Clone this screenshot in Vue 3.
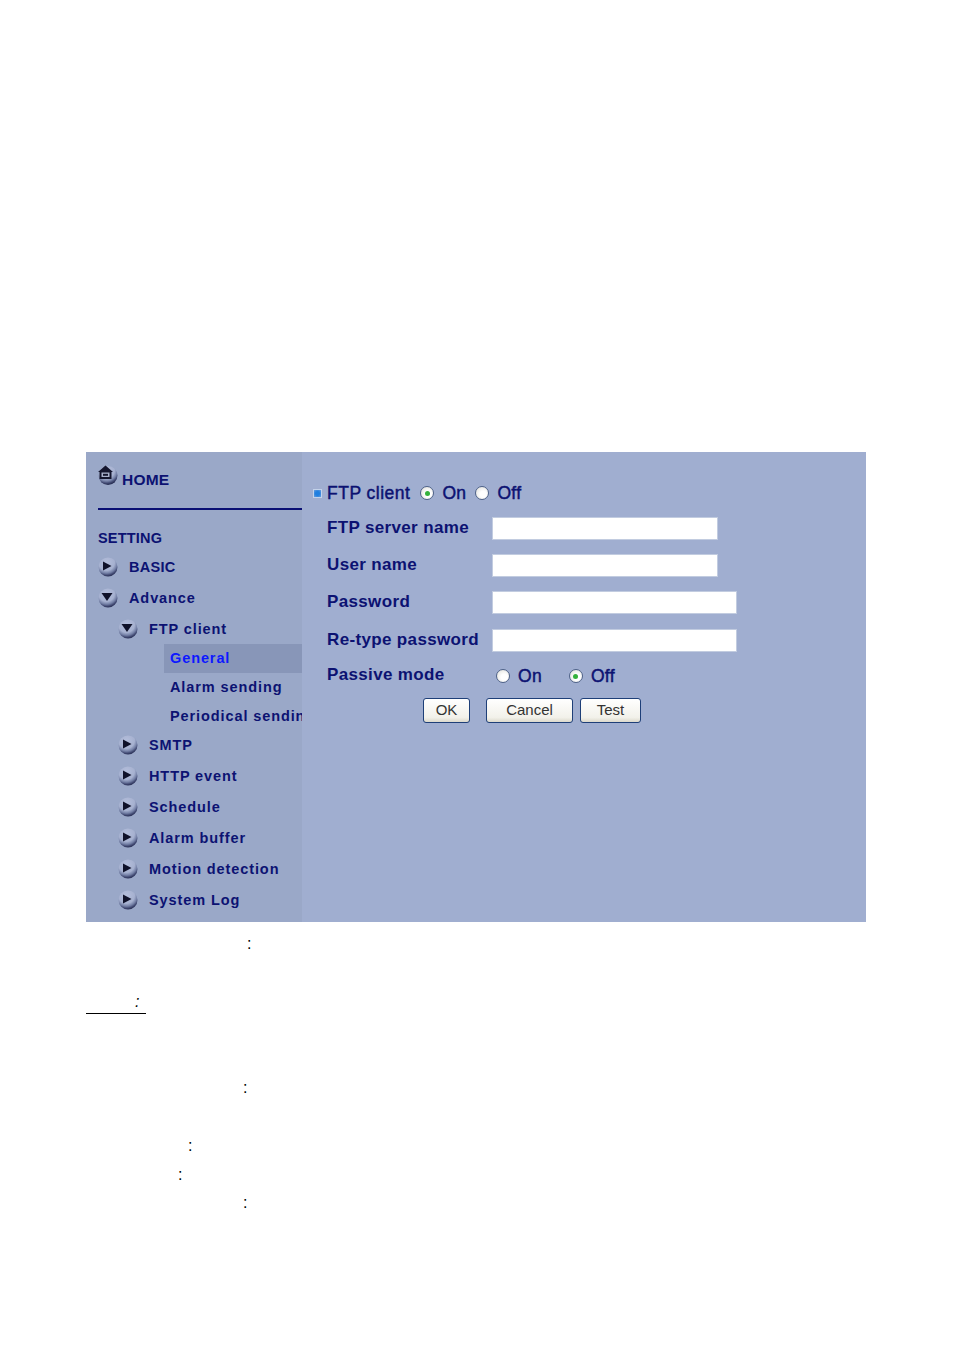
<script setup>
const topItems = ['SMTP', 'HTTP event', 'Schedule', 'Alarm buffer', 'Motion detection', 'System Log']
const subItems = [
  { label: 'General', active: true },
  { label: 'Alarm sending', active: false },
  { label: 'Periodical sending', active: false }
]
const fields = [
  { label: 'FTP server name', wide: false },
  { label: 'User name', wide: false },
  { label: 'Password', wide: true },
  { label: 'Re-type password', wide: true }
]
const notes = ['n1', 'n2', 'n3', 'n4', 'n5', 'n6']
const right = 'M5 4.5 L13.5 9 L5 13.5 Z'
const down = 'M3.5 5 L14.5 5 L9 13 Z'
</script>

<template>
  <div class="page">
    <svg width="0" height="0" class="defs">
      <defs>
        <radialGradient id="ball" gradientUnits="userSpaceOnUse" cx="8.5" cy="5.5" r="14.5">
          <stop offset="0" stop-color="#b4bedb" />
          <stop offset="0.55" stop-color="#a6b1d0" />
          <stop offset="0.74" stop-color="#7480a6" />
          <stop offset="0.88" stop-color="#3f4770" />
          <stop offset="1" stop-color="#22284c" />
        </radialGradient>
      </defs>
    </svg>

    <div class="panel">
      <aside class="side">
        <div class="home">
          <svg class="ball" viewBox="0 0 20 20">
            <circle cx="10" cy="10.5" r="9.5" fill="url(#ball)" />
            <path d="M7.5 0.5 L15 7 L13.5 7 L13.5 14 L1.5 14 L1.5 7 L0 7 Z" fill="#14162e" />
            <rect x="3.5" y="7.5" width="8" height="4.5" fill="#a9b2cc" />
            <rect x="5" y="8.8" width="5" height="2" fill="#14162e" />
          </svg>
          <span>HOME</span>
        </div>
        <div class="rule"></div>
        <div class="setting">SETTING</div>

        <div class="item">
          <svg class="ball" viewBox="0 0 20 20">
            <circle cx="10" cy="10" r="9.5" fill="url(#ball)" />
            <path :d="right" fill="#10122a" />
          </svg>
          <span class="caps">BASIC</span>
        </div>
        <div class="item">
          <svg class="ball" viewBox="0 0 20 20">
            <circle cx="10" cy="10" r="9.5" fill="url(#ball)" />
            <path :d="down" fill="#10122a" />
          </svg>
          <span>Advance</span>
        </div>
        <div class="item lvl2">
          <svg class="ball" viewBox="0 0 20 20">
            <circle cx="10" cy="10" r="9.5" fill="url(#ball)" />
            <path :d="down" fill="#10122a" />
          </svg>
          <span>FTP client</span>
        </div>

        <div class="subs">
          <div v-for="s in subItems" :key="s.label" class="sub" :class="{ active: s.active }">{{ s.label }}</div>
        </div>

        <div v-for="t in topItems" :key="t" class="item lvl2">
          <svg class="ball" viewBox="0 0 20 20">
            <circle cx="10" cy="10" r="9.5" fill="url(#ball)" />
            <path :d="right" fill="#10122a" />
          </svg>
          <span>{{ t }}</span>
        </div>
      </aside>

      <main class="main">
        <div class="head">
          <span class="bullet"></span>
          <span class="title">FTP client</span>
          <span class="radio on"></span>
          <span class="opt">On</span>
          <span class="radio r2"></span>
          <span class="opt">Off</span>
        </div>

        <div v-for="f in fields" :key="f.label" class="row">
          <label class="lbl">{{ f.label }}</label>
          <span class="input" :class="{ wide: f.wide }"></span>
        </div>

        <div class="passive">
          <span class="lbl pl">Passive mode</span>
          <span class="radio"></span>
          <span class="opt">On</span>
          <span class="radio on r3"></span>
          <span class="opt">Off</span>
        </div>

        <div class="btns">
          <button class="btn b-ok">OK</button>
          <button class="btn b-cancel">Cancel</button>
          <button class="btn b-test">Test</button>
        </div>
      </main>
    </div>

    <div class="notes">
      <div v-for="n in notes" :key="n" class="note" :class="n">:</div>
    </div>
  </div>
</template>

<style scoped>
.page {
  width: 954px;
  height: 1350px;
  padding: 452px 0 0 86px;
  box-sizing: border-box;
  background: #fff;
  font-family: "Liberation Sans", Arial, sans-serif;
  overflow: hidden;
}
.defs {
  position: absolute;
}
.panel {
  display: flex;
  width: 780px;
  height: 470px;
  background: #a0aed0;
  color: #0c1272;
}
.side {
  width: 216px;
  flex: none;
  background: #9aa8c8;
  overflow: hidden;
  font-weight: 700;
  font-size: 14.5px;
  letter-spacing: 0.9px;
}
.ball {
  width: 20px;
  height: 20px;
  flex: none;
}
.caps {
  letter-spacing: 0.3px;
}
.home {
  display: flex;
  align-items: flex-start;
  gap: 4px;
  height: 56px;
  padding: 13px 0 0 12px;
  box-sizing: border-box;
  font-size: 15.5px;
  letter-spacing: 0.2px;
}
.home span {
  margin-top: 6px;
}
.rule {
  height: 2px;
  margin-left: 12px;
  background: #0a0f74;
}
.setting {
  margin: 19px 0 4px 12px;
  height: 18px;
  line-height: 18px;
  font-size: 14.5px;
  letter-spacing: 0.2px;
}
.item {
  display: flex;
  align-items: center;
  gap: 11px;
  height: 31px;
  padding-left: 12px;
  white-space: nowrap;
}
.lvl2 {
  padding-left: 32px;
}
.subs {
  padding-left: 78px;
  margin-bottom: -2px;
}
.sub {
  height: 29px;
  line-height: 29px;
  padding-left: 6px;
  white-space: nowrap;
}
.sub.active {
  background: #8896b8;
  color: #0d18ff;
}
.main {
  flex: 1;
  padding: 31px 0 0 11px;
  font-size: 17px;
  font-weight: 700;
}
.head {
  display: flex;
  align-items: center;
  height: 20px;
}
.bullet {
  width: 9px;
  height: 9px;
  margin-right: 5px;
  background: radial-gradient(circle at 50% 50%, #1f7fe0 40%, #6f9fdd 100%);
  border: 1px solid #c3d2ea;
  box-sizing: border-box;
}
.title {
  font-size: 17.5px;
  font-weight: 400;
  letter-spacing: 0.5px;
  -webkit-text-stroke: 0.45px #0c1272;
  margin-right: 10px;
}
.opt {
  font-weight: 400;
  -webkit-text-stroke: 0.45px #0c1272;
  margin-left: 8px;
  font-size: 17.5px;
  letter-spacing: 0.3px;
}
.radio {
  position: relative;
  width: 14px;
  height: 14px;
  flex: none;
  box-sizing: border-box;
  border-radius: 50%;
  background: radial-gradient(circle at 60% 60%, #fff 30%, #dcdcd6 100%);
  border: 1px solid #4f6288;
}
.radio.on::after {
  content: "";
  position: absolute;
  left: 3.5px;
  top: 3.5px;
  width: 5px;
  height: 5px;
  border-radius: 50%;
  background: #35b23c;
}
.r2 {
  margin-left: 9px;
}
.row {
  display: flex;
  align-items: center;
  height: 23px;
  margin-top: 14px;
  padding-left: 14px;
}
.row:nth-of-type(5) {
  margin-top: 15px;
}
.lbl {
  width: 165px;
  flex: none;
  font-size: 17px;
  letter-spacing: 0.35px;
  padding-bottom: 2px;
}
.input {
  width: 226px;
  height: 23px;
  box-sizing: border-box;
  background: #fff;
  border: 1px solid #c2cce0;
}
.input.wide {
  width: 245px;
}
.passive {
  display: flex;
  align-items: center;
  height: 24px;
  margin-top: 12px;
  padding-left: 14px;
}
.pl {
  width: 169px;
}
.r3 {
  margin-left: 27px;
}
.btns {
  display: flex;
  margin: 10px 0 0 110px;
}
.btn {
  height: 25px;
  padding: 0 0 2px;
  box-sizing: border-box;
  border: 1px solid #1e3f78;
  border-radius: 3px;
  background: linear-gradient(#fff, #f2f1ea 80%, #dcd9cc);
  color: #333;
  font: 400 15px "Liberation Sans", Arial, sans-serif;
}
.b-ok {
  width: 47px;
}
.b-cancel {
  width: 87px;
  margin-left: 16px;
}
.b-test {
  width: 61px;
  margin-left: 7px;
}
.notes {
  padding-top: 7px;
  font-size: 16px;
  line-height: 29px;
  color: #000;
}
.note {
  height: 29px;
}
.n1 {
  padding-left: 161px;
}
.n2 {
  width: 60px;
  height: 27px;
  margin-top: 29px;
  padding-left: 49px;
  box-sizing: border-box;
  border-bottom: 1px solid #000;
  font-style: italic;
}
.n3 {
  padding-left: 157px;
  margin-top: 59px;
}
.n4 {
  padding-left: 102px;
  margin-top: 29px;
}
.n5 {
  padding-left: 92px;
}
.n6 {
  padding-left: 157px;
  margin-top: -1px;
}
</style>
